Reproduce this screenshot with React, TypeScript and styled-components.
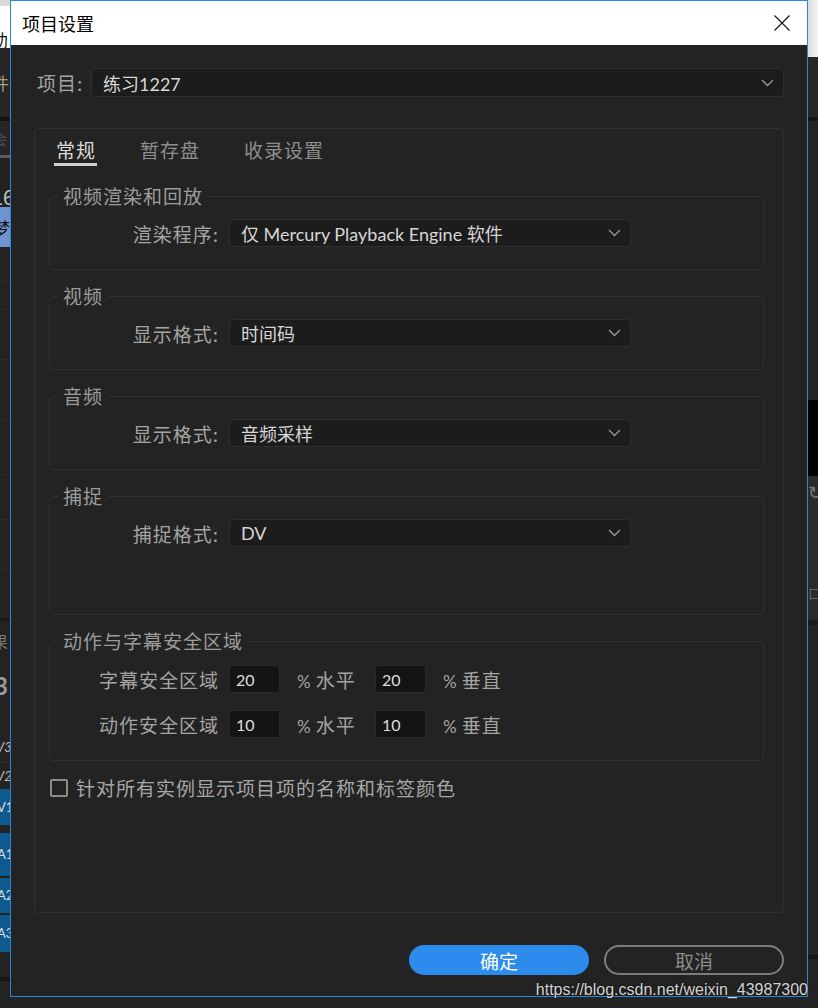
import React from "react";
import styled, { createGlobalStyle } from "styled-components";

const CJK = `"Noto Sans CJK SC", "Noto Sans", sans-serif`;
const LATIN = `Lato, "Noto Sans CJK SC", sans-serif`;

const GlobalStyle = createGlobalStyle`
  html, body { margin: 0; padding: 0; background: #232323; }
  body { width: 818px; height: 1008px; overflow: hidden; font-family: ${CJK}; }
  * { box-sizing: border-box; }
`;

const Screen = styled.div`
  position: relative;
  width: 818px;
  height: 1008px;
  display: flex;
  flex-direction: column;
  background: #232323;
  overflow: hidden;
`;

const Desk = styled.div`
  display: flex;
  height: 997px;
  flex-shrink: 0;
`;

const BelowDesk = styled.div`
  flex: 1;
  background: #232323;
`;

const Strip = styled.div`
  width: 10px;
  flex-shrink: 0;
  display: flex;
  flex-direction: column;
  overflow: hidden;
`;

const Seg = styled.div<{ $h: number; $bg: string; $color?: string; $size?: number; $shift?: number; $align?: string; $line?: string }>`
  height: ${(p) => p.$h}px;
  flex-shrink: 0;
  background: ${(p) => p.$bg};
  color: ${(p) => p.$color || "#999"};
  font-family: ${CJK};
  font-size: ${(p) => p.$size || 16}px;
  line-height: 1;
  white-space: nowrap;
  display: flex;
  align-items: ${(p) => p.$align || "center"};
  overflow: hidden;
  border-bottom: ${(p) => p.$line || "none"};
  & > span {
    margin-left: ${(p) => p.$shift || 0}px;
  }
`;

const Dialog = styled.div`
  width: 798px;
  height: 997px;
  flex-shrink: 0;
  border: 1px solid #2b88d8;
  display: flex;
  flex-direction: column;
  background: #232323;
`;

const TitleBar = styled.div`
  height: 44px;
  flex-shrink: 0;
  background: #ffffff;
  display: flex;
  align-items: center;
  justify-content: space-between;
  padding: 0 17px 0 11px;
`;

const TitleText = styled.div`
  font-family: ${CJK};
  font-size: 18px;
  color: #000;
  line-height: 1;
`;

const Body = styled.div`
  flex: 1;
  display: flex;
  flex-direction: column;
  padding: 23px 23px 21px;
  min-height: 0;
`;

const ProjectRow = styled.div`
  display: flex;
  align-items: center;
  padding-left: 3px;
`;

const ProjectLabel = styled.div`
  width: 54px;
  font-size: 19px;
  letter-spacing: 1px;
  color: #a4a4a4;
`;

const Select = styled.div<{ $w?: number; $h?: number }>`
  ${(p) => (p.$w ? `width: ${p.$w}px;` : "flex: 1;")}
  height: ${(p) => p.$h || 28}px;
  background: #1c1c1c;
  border: 1px solid #2f2f2f;
  border-radius: 4px;
  display: flex;
  align-items: center;
  justify-content: space-between;
  padding: 0 9px 0 11px;
`;

const SelectValue = styled.span`
  font-family: ${LATIN};
  font-size: 18px;
  color: #d6d6d6;
  white-space: nowrap;
`;

const Panel = styled.div`
  flex: 1;
  margin-top: 31px;
  border: 1px solid #303030;
  border-radius: 4px;
  padding: 9px 19px 0 14px;
  display: flex;
  flex-direction: column;
`;

const Tabs = styled.div`
  display: flex;
  gap: 41px;
  margin-left: 5px;
`;

const Tab = styled.div<{ $active?: boolean }>`
  font-size: 19px;
  letter-spacing: 1px;
  line-height: 24px;
  padding: 0 1px 1px 2px;
  color: ${(p) => (p.$active ? "#dadada" : "#8e8e8e")};
  border-bottom: 3px solid ${(p) => (p.$active ? "#cfcfcf" : "transparent")};
`;

const Group = styled.fieldset<{ $top: number; $pt?: number; $pb?: number }>`
  margin: ${(p) => p.$top}px 0 0;
  border: 1px solid #303030;
  border-radius: 4px;
  padding: ${(p) => p.$pt ?? 11}px 0 ${(p) => p.$pb ?? 22}px;
  min-width: 0;
  display: flex;
  flex-direction: column;
`;

const Legend = styled.legend`
  margin-left: 8px;
  padding: 0 5px;
  font-size: 19px;
  letter-spacing: 1px;
  line-height: 24px;
  color: #9c9c9c;
`;

const FieldRow = styled.div`
  display: grid;
  grid-template-columns: 179px 402px;
  align-items: center;
`;

const FieldLabel = styled.div`
  text-align: right;
  padding-right: 10px;
  font-size: 19px;
  letter-spacing: 1px;
  color: #a4a4a4;
  white-space: nowrap;
`;

const SafeRows = styled.div`
  display: flex;
  flex-direction: column;
  gap: 17px;
`;

const SafeRow = styled.div`
  display: grid;
  grid-template-columns: 179px 51px 95px 51px auto;
  align-items: center;
`;

const NumBox = styled.div`
  height: 28px;
  background: #141414;
  border: 1px solid #2a2a2a;
  border-radius: 3px;
  display: flex;
  align-items: center;
  padding-left: 6px;
  font-family: ${LATIN};
  font-size: 16px;
  color: #dedede;
`;

const Unit = styled.div`
  padding-left: 17px;
  font-size: 19px;
  letter-spacing: 1px;
  color: #a4a4a4;
  white-space: nowrap;
  & > b {
    font-family: ${LATIN};
    font-weight: 400;
    font-size: 17px;
    margin-right: 4px;
  }
`;

const CheckRow = styled.label`
  display: flex;
  align-items: center;
  gap: 8px;
  margin: 13px 0 0 1px;
  font-size: 19px;
  letter-spacing: 1px;
  color: #a6a6a6;
`;

const CheckBox = styled.span`
  width: 18px;
  height: 18px;
  border: 2px solid #8c8c8c;
  border-radius: 2px;
  flex-shrink: 0;
`;

const Buttons = styled.div`
  display: flex;
  justify-content: flex-end;
  gap: 15px;
  margin-top: 32px;
`;

const Button = styled.button<{ $primary?: boolean }>`
  width: 180px;
  height: 30px;
  border-radius: 15px;
  font-family: ${CJK};
  font-size: 19px;
  line-height: 1;
  padding: 0;
  cursor: pointer;
  background: ${(p) => (p.$primary ? "#2d8ceb" : "transparent")};
  color: ${(p) => (p.$primary ? "#ffffff" : "#8c8c8c")};
  border: ${(p) => (p.$primary ? "none" : "2px solid #7d7d7d")};
`;

const Watermark = styled.div`
  position: absolute;
  right: 10px;
  bottom: 9px;
  font-family: "Liberation Sans", Arial, sans-serif;
  font-size: 16px;
  color: #d4d4d4;
  text-shadow: 0 0 2px rgba(0, 0, 0, 0.9);
  white-space: nowrap;
`;

const Chevron = () => (
  <svg width="13" height="8" viewBox="0 0 13 8">
    <path d="M1 1 L6.5 6.5 L12 1" fill="none" stroke="#9a9a9a" strokeWidth="1.3" />
  </svg>
);

const CloseIcon = () => (
  <svg width="16" height="16" viewBox="0 0 16 16">
    <path d="M0.5 0.5 L15.5 15.5 M15.5 0.5 L0.5 15.5" stroke="#111" strokeWidth="1.1" fill="none" />
  </svg>
);

const Dropdown: React.FC<{ value: string; w?: number; h?: number }> = ({ value, w, h }) => (
  <Select $w={w} $h={h}>
    <SelectValue>{value}</SelectValue>
    <Chevron />
  </Select>
);

const LeftStrip = () => (
  <Strip>
    <Seg $h={6} $bg="#d8d8d8" />
    <Seg $h={42} $bg="#ffffff" $color="#111" $size={17} $shift={-9} $align="flex-end">
      <span>助</span>
    </Seg>
    <Seg $h={69} $bg="#262626" $color="#a89f8a" $size={17} $shift={-8}>
      <span>件</span>
    </Seg>
    <Seg $h={4} $bg="#121212" />
    <Seg $h={34} $bg="#262626" $color="#4d4d4d" $size={16} $shift={-9}>
      <span>会</span>
    </Seg>
    <Seg $h={3} $bg="#5a5a5a" />
    <Seg $h={49} $bg="#222222" $color="#c4c4c4" $size={20} $shift={-8} $align="flex-end">
      <span>16</span>
    </Seg>
    <Seg $h={40} $bg="#6d94cf" $color="#111" $size={17} $shift={-7}>
      <span>梦</span>
    </Seg>
    <Seg $h={35} $bg="#232323" $line="1px solid #2c2c2c" />
    <Seg $h={28} $bg="#232323" $line="1px solid #2c2c2c" />
    <Seg $h={50} $bg="#232323" $line="1px solid #2c2c2c" />
    <Seg $h={60} $bg="#232323" $line="1px solid #2c2c2c" />
    <Seg $h={55} $bg="#232323" $line="1px solid #2c2c2c" />
    <Seg $h={45} $bg="#232323" $line="1px solid #2c2c2c" />
    <Seg $h={50} $bg="#232323" $line="1px solid #2c2c2c" />
    <Seg $h={48} $bg="#232323" />
    <Seg $h={3} $bg="#1a1a1a" />
    <Seg $h={40} $bg="#232323" $color="#777" $size={16} $shift={-8}>
      <span>果</span>
    </Seg>
    <Seg $h={50} $bg="#232323" $color="#9a9a9a" $size={24} $shift={-6}>
      <span style={{ fontWeight: 700, fontFamily: "Lato, sans-serif" }}>3</span>
    </Seg>
    <Seg $h={22} $bg="#232323" />
    <Seg $h={30} $bg="#232323" $color="#bbb" $size={13} $shift={-4} $line="1px solid #333">
      <span style={{ fontStyle: "italic", fontFamily: "Lato, sans-serif" }}>V3</span>
    </Seg>
    <Seg $h={26} $bg="#232323" $color="#bbb" $size={13} $shift={-4}>
      <span style={{ fontStyle: "italic", fontFamily: "Lato, sans-serif" }}>V2</span>
    </Seg>
    <Seg $h={36} $bg="#0e5a8e" $color="#ddd" $size={13} $shift={-3}>
      <span style={{ fontFamily: "Lato, sans-serif" }}>V1</span>
    </Seg>
    <Seg $h={8} $bg="#232323" />
    <Seg $h={45} $bg="#0e5a8e" $color="#ddd" $size={13} $shift={-3} $line="2px solid #232323">
      <span style={{ fontFamily: "Lato, sans-serif" }}>A1</span>
    </Seg>
    <Seg $h={37} $bg="#0e5a8e" $color="#ddd" $size={13} $shift={-3} $line="2px solid #232323">
      <span style={{ fontFamily: "Lato, sans-serif" }}>A2</span>
    </Seg>
    <Seg $h={37} $bg="#0e5a8e" $color="#ddd" $size={13} $shift={-3}>
      <span style={{ fontFamily: "Lato, sans-serif" }}>A3</span>
    </Seg>
    <Seg $h={25} $bg="#232323" />
    <Seg $h={4} $bg="#151515" />
    <Seg $h={20} $bg="#232323" />
  </Strip>
);

const RightStrip = () => (
  <Strip>
    <Seg $h={57} $bg="linear-gradient(90deg,#dcdcdc,#f4f4f4)" />
    <Seg $h={60} $bg="#262626" />
    <Seg $h={4} $bg="#151515" />
    <Seg $h={279} $bg="#232323" />
    <Seg $h={76} $bg="#000000" />
    <Seg $h={30} $bg="#2a2a2a" $color="#777" $size={18} $shift={0}>
      <span>↻</span>
    </Seg>
    <Seg $h={79} $bg="#2a2a2a" />
    <Seg $h={15} $bg="#2a2a2a" $color="#666" $size={14}>
      <span>口</span>
    </Seg>
    <Seg $h={20} $bg="#2a2a2a" />
    <Seg $h={5} $bg="#1a1a1a" />
    <Seg $h={330} $bg="#232323" />
    <Seg $h={4} $bg="#151515" />
    <Seg $h={38} $bg="#232323" />
  </Strip>
);

export default function App() {
  return (
    <Screen>
      <GlobalStyle />
      <Desk>
        <LeftStrip />
        <Dialog>
          <TitleBar>
            <TitleText>项目设置</TitleText>
            <CloseIcon />
          </TitleBar>
          <Body>
            <ProjectRow>
              <ProjectLabel>项目:</ProjectLabel>
              <Dropdown value="练习1227" h={29} />
            </ProjectRow>
            <Panel>
              <Tabs>
                <Tab $active>常规</Tab>
                <Tab>暂存盘</Tab>
                <Tab>收录设置</Tab>
              </Tabs>
              <Group $top={18}>
                <Legend>视频渲染和回放</Legend>
                <FieldRow>
                  <FieldLabel>渲染程序:</FieldLabel>
                  <Dropdown value="仅 Mercury Playback Engine 软件" w={402} />
                </FieldRow>
              </Group>
              <Group $top={14}>
                <Legend>视频</Legend>
                <FieldRow>
                  <FieldLabel>显示格式:</FieldLabel>
                  <Dropdown value="时间码" w={402} />
                </FieldRow>
              </Group>
              <Group $top={14}>
                <Legend>音频</Legend>
                <FieldRow>
                  <FieldLabel>显示格式:</FieldLabel>
                  <Dropdown value="音频采样" w={402} />
                </FieldRow>
              </Group>
              <Group $top={14} $pb={67}>
                <Legend>捕捉</Legend>
                <FieldRow>
                  <FieldLabel>捕捉格式:</FieldLabel>
                  <Dropdown value="DV" w={402} />
                </FieldRow>
              </Group>
              <Group $top={14} $pt={12}>
                <Legend>动作与字幕安全区域</Legend>
                <SafeRows>
                  <SafeRow>
                    <FieldLabel>字幕安全区域</FieldLabel>
                    <NumBox>20</NumBox>
                    <Unit>
                      <b>%</b>水平
                    </Unit>
                    <NumBox>20</NumBox>
                    <Unit>
                      <b>%</b>垂直
                    </Unit>
                  </SafeRow>
                  <SafeRow>
                    <FieldLabel>动作安全区域</FieldLabel>
                    <NumBox>10</NumBox>
                    <Unit>
                      <b>%</b>水平
                    </Unit>
                    <NumBox>10</NumBox>
                    <Unit>
                      <b>%</b>垂直
                    </Unit>
                  </SafeRow>
                </SafeRows>
              </Group>
              <CheckRow>
                <CheckBox />
                针对所有实例显示项目项的名称和标签颜色
              </CheckRow>
            </Panel>
            <Buttons>
              <Button $primary>确定</Button>
              <Button>取消</Button>
            </Buttons>
          </Body>
        </Dialog>
        <RightStrip />
      </Desk>
      <BelowDesk />
      <Watermark>https://blog.csdn.net/weixin_43987300</Watermark>
    </Screen>
  );
}
